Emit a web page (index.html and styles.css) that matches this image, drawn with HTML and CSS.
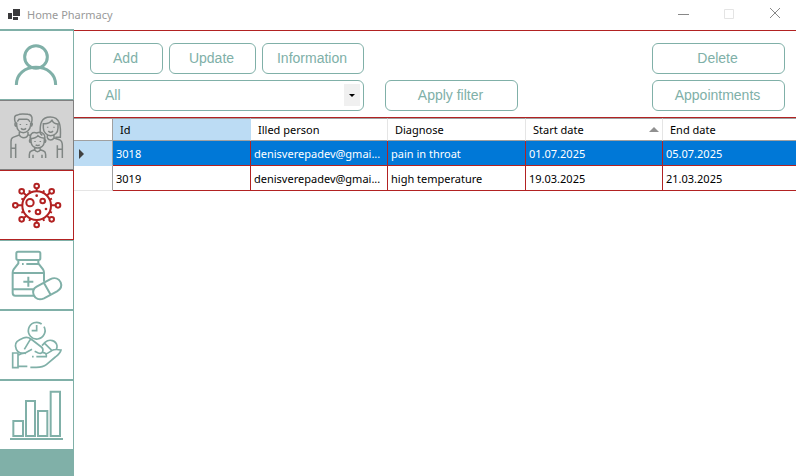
FILE: index.html
```html
<!DOCTYPE html>
<html lang="en">
<head>
<meta charset="utf-8">
<title>Home Pharmacy</title>
<link rel="stylesheet" href="styles.css">
</head>
<body>
<header class="titlebar">
  <svg class="app-icon" viewBox="0 0 12 11" aria-hidden="true"><path fill="#3a3a3c" d="M0 4h4v6H0zM5 0h7v7H5zM5 8h5v3H5z"/></svg>
  <span class="app-title">Home Pharmacy</span>
  <div class="window-controls">
    <button type="button" aria-label="Minimize"><svg viewBox="0 0 11 11"><path d="M0 5.5h11" stroke="#888"/></svg></button>
    <button type="button" aria-label="Maximize" disabled><svg viewBox="0 0 11 11"><path d="M1.500 .5h9v9h-9z" stroke="#e4e4e4"/></svg></button>
    <button type="button" aria-label="Close"><svg viewBox="0 0 11 11"><path d="M2 -1l10 10M12 -1l-10 10" stroke="#888"/></svg></button>
  </div>
</header>
<div class="window">
  <nav class="sidebar" aria-label="Sections">
    <button class="nav-item" type="button" aria-label="Profile">
      <svg viewBox="3 15 216 204" stroke-width="9"><circle cx="108" cy="93" r="34"/><path d="M49 177C49 142 76 124 108 124S167 142 167 177"/></svg>
    </button>
    <button class="nav-item family" type="button" aria-label="Family">
      <svg viewBox="3 15 216 204" stroke-width="4.500">
        <path d="M47 83C41 65 43 57 53 57C60 52 77 54 84 55C98 56 98 69 94 83M50 80V88C51 102 60 110 70 110S90 102 92 88V80M50 80C43 79 43 91 51 91M92 80C99 79 98 91 91 91M52 77L57 70H81C86 70 88 74 90 78M58 108V117L39 124C34 126 33 130 33 137V186M84 108V116L92 119M58 117C64 128 79 128 84 117M47 143V186M33 157H47"/>
        <path d="M63 97C67 102 74 102 78 97M61 84v3M80 84v3"/>
        <path d="M121 113C119 86 122 63 151 63S183 89 181 124H166M121 113L127 118M130 83C143 85 151 79 156 73C160 81 168 84 174 84V96C174 111 163 119 152 119S130 110 130 96ZM142 117V126M162 117V126L178 131C185 134 187 138 187 148V186M142 126C147 134 157 134 162 126M172 148V186M172 160H187"/>
        <path d="M145 105C149 110 155 110 159 105M143 92v3M162 92v3"/>
        <path d="M91 132C88 114 97 107 110 111C123 105 138 112 134 132M93 127C100 128 111 124 114 119C121 126 127 127 133 127V137C132 149 123 156 113 156S94 149 93 137ZM93 130C87 130 86 140 94 141M133 130C139 130 139 140 132 141M104 154V161L94 165C89 167 88 170 88 176V186M121 154V161L131 165C136 167 137 170 137 176V186M104 161C108 169 117 169 121 161M99 176V186M126 176V186"/>
        <path d="M107 146C110 149 116 149 119 146M105 135v3M121 135v3"/>
      </svg>
    </button>
    <button class="nav-item illness" type="button" aria-label="Illnesses" aria-current="page">
      <svg viewBox="3 15 216 204" stroke-width="6">
        <circle cx="110" cy="119" r="43"/>
        <path d="M110 76V67M153 118H166M110 162V170M67 118H54M140 89L149 81M140 149L149 156M80 89L71 81M80 149L71 156M88 73L90 82M132 73L129 82M88 165L91 157M132 165L129 156M64 98L72 101M156 98L148 101M64 140L72 137M156 140L148 137"/>
        <circle cx="110" cy="60" r="7"/><circle cx="174" cy="118" r="7"/><circle cx="110" cy="177" r="7"/><circle cx="46" cy="118" r="7"/>
        <circle cx="155" cy="76" r="7"/><circle cx="155" cy="160" r="7"/><circle cx="65" cy="76" r="7"/><circle cx="65" cy="160" r="7"/>
        <circle cx="90" cy="110" r="11"/><circle cx="128" cy="105" r="7"/><circle cx="114" cy="138" r="7"/>
        <g class="dots"><circle cx="110" cy="89" r="4"/><circle cx="138" cy="129" r="4"/><circle cx="88" cy="136" r="4"/></g>
      </svg>
    </button>
    <button class="nav-item" type="button" aria-label="Medicines">
      <svg viewBox="3 15 216 204" stroke-width="6">
        <path d="M54 47H116Q121 47 121 52V67Q121 72 116 72H54Q49 72 49 67V52Q49 47 54 47ZM55 73V82L41 100Q38 105 38 110V171Q38 179 46 179H102M115 73V82L129 100Q132 105 132 110V137M66 84H71M79 84H114M38 111H132M38 160H103M85 122V152M70 137H100"/>
        <path d="M110 152L150 130C166 122 177 129 182 139C187 151 181 160 171 166L132 187C117 194 106 188 101 177C97 166 101 157 110 152ZM132 141L152 176"/>
      </svg>
    </button>
    <button class="nav-item" type="button" aria-label="Intake">
      <svg viewBox="3 15 216 204" stroke-width="5">
        <path d="M125 54A25 25 0 1 0 132 62"/><path d="M110 57V74H95"/>
        <path d="M96 130L77 140C64 145 53 139 49 130C42 115 49 106 59 101L70 96C77 93 86 94 93 99L124 123C129 127 130 133 127 139C124 143 120 143 115 141L104 136M73 130L91 100"/>
        <path d="M126 119L135 109C149 97 168 104 171 119C172 125 170 128 168 132M134 112L156 134M137 144C145 142 150 137 155 134C164 128 173 130 183 132C181 142 174 147 166 153L139 176C128 185 116 184 105 184H91M96 152H101M109 152H139C141 143 134 139 127 140"/>
        <path d="M38 141H54V185H38ZM54 148C62 143 70 140 78 142M54 181H82"/>
      </svg>
    </button>
    <button class="nav-item" type="button" aria-label="Statistics">
      <svg viewBox="3 15 216 204" stroke-width="6">
        <path d="M40 135H69V180H40ZM78 75H105V180H78ZM114 105H142V180H114ZM152 47H180V180H152ZM30 189H189"/>
      </svg>
    </button>
  </nav>
  <main class="content">
    <div class="toolbar">
      <div class="actions">
        <button class="btn add" type="button">Add</button>
        <button class="btn update" type="button">Update</button>
        <button class="btn info" type="button">Information</button>
      </div>
      <button class="btn delete" type="button">Delete</button>
      <div class="combo">
        <select aria-label="Filter"><option>All</option></select>
        <span class="combo-arrow"></span>
      </div>
      <button class="btn apply" type="button">Apply filter</button>
      <button class="btn appointments" type="button">Appointments</button>
    </div>
    <table class="grid">
      <colgroup><col class="c-head"><col class="c-wide"><col class="c-mid"><col class="c-wide"><col class="c-mid"><col></colgroup>
      <thead>
        <tr><td class="corner"></td><th class="current" scope="col">Id</th><th scope="col">Illed person</th><th scope="col">Diagnose</th><th scope="col" aria-sort="ascending"><span class="sorted">Start date</span></th><th scope="col">End date</th></tr>
      </thead>
      <tbody>
        <tr class="selected"><td class="row-head"><svg class="marker" viewBox="0 0 5 10" aria-hidden="true"><path d="M0 0L5 5L0 10Z"/></svg></td><td>3018</td><td>denisverepadev@gmai...</td><td>pain in throat</td><td>01.07.2025</td><td>05.07.2025</td></tr>
        <tr><td class="row-head"></td><td>3019</td><td>denisverepadev@gmai...</td><td>high temperature</td><td>19.03.2025</td><td>21.03.2025</td></tr>
      </tbody>
    </table>
  </main>
</div>
</body>
</html>
```

FILE: styles.css
```css
:root {
  --teal: #80b0a8;
  --red: #b22222;
  --gray: #a0a0a0;
  --ui: "Noto Sans", "Open Sans", sans-serif;
}
* { box-sizing: border-box; }
body {
  margin: 0;
  min-height: 100vh;
  display: flex;
  flex-direction: column;
  background: #fff;
  font: 11px/16px var(--ui);
  color: #000;
}
button { margin: 0; padding: 0; border: 0; background: none; font: inherit; }
svg { display: block; fill: none; }

.titlebar { display: flex; align-items: center; height: 29px; padding-left: 8px; }
.app-icon { width: 12px; height: 11px; }
.app-title { margin-left: 7px; color: #999; }
.window-controls { display: flex; margin-left: auto; }
.window-controls button { width: 45px; height: 28px; display: grid; place-items: center; }
.window-controls svg { width: 11px; height: 11px; overflow: visible; }

.window { flex: 1; display: flex; }
.sidebar { width: 74px; flex: none; padding-top: 1px; background: var(--teal); }
.nav-item {
  display: block;
  width: 100%;
  height: 70px;
  border: 1px solid var(--teal);
  border-left-width: 0;
  padding-left: 1px;
  background: #fff;
  color: var(--teal);
}
.nav-item svg { width: 100%; height: 100%; stroke: currentColor; }
.family { background: #d3d3d3; border-color: #808080; color: #808684; }
.illness { border-color: var(--red); color: var(--red); }
.dots { fill: currentColor; stroke: none; }

.content { flex: 1; min-width: 0; padding-top: 1px; }
.toolbar {
  display: grid;
  grid-template-columns: 274px 133px 1fr;
  gap: 6px 21px;
  padding: 12px 11px 6px 16px;
  border-top: 1px solid var(--red);
  border-bottom: 1px solid var(--red);
}
.actions { display: flex; gap: 6px; grid-column: 1 / 3; }
.btn, .combo {
  height: 31px;
  border: 1px solid var(--teal);
  border-radius: 6px;
  background: #fff;
  color: var(--teal);
  font: 14px/16px "Liberation Sans", Arial, sans-serif;
}
.btn { padding: 0 2px 2px 0; }
.add { width: 73px; }
.update { width: 87px; }
.info { width: 102px; }
.delete, .appointments { width: 133px; justify-self: end; }
.combo { position: relative; }
.combo select {
  appearance: none;
  width: 100%;
  height: 100%;
  padding: 0 24px 2px 14px;
  border: 0;
  background: none;
  color: var(--teal);
  font: inherit;
}
.combo-arrow {
  position: absolute;
  top: 3px;
  right: 3px;
  width: 16px;
  height: 22px;
  display: grid;
  place-items: center;
  background: #f0f0f0;
  pointer-events: none;
}
.combo-arrow::after {
  content: "";
  border: 3px solid transparent;
  border-top-color: #000;
  border-bottom: 0;
}

.grid { width: 100%; table-layout: fixed; border-collapse: separate; border-spacing: 0; }
.c-head { width: 39px; }
.c-wide { width: 138px; }
.c-mid { width: 137px; }
.grid th, .grid td {
  height: 25px;
  padding: 1px 3px 0;
  border-right: 1px solid var(--red);
  border-bottom: 1px solid var(--red);
  text-align: left;
  font-weight: 400;
  white-space: nowrap;
  overflow: hidden;
}
.grid thead th, .grid thead td {
  height: 23px;
  padding: 0 7px;
  border-top: 1px solid var(--gray);
  border-right-color: #e5e5e5;
  border-bottom-color: var(--gray);
}
.grid thead .current { background: #bcdcf4; border-right-color: #bcdcf4; }
.grid .corner, .grid .row-head { border-right-color: var(--gray); }
.grid thead .corner { border-right-color: var(--gray); }
.grid .row-head { padding-left: 5px; border-bottom-color: #e5e5e5; }
.grid tr > :last-child { border-right: 0; }
.selected td { background: #0078d7; color: #fff; }
.selected .row-head { background: #bcdcf4; border-bottom-color: #bcdcf4; }
.marker { width: 5px; height: 10px; fill: #404040; }
.sorted { display: flex; align-items: center; justify-content: space-between; }
.grid thead th[aria-sort] { padding-right: 3px; }
.sorted::after {
  content: "";
  border: 5px solid transparent;
  border-bottom-color: #909090;
  border-top: 0;
}
```
